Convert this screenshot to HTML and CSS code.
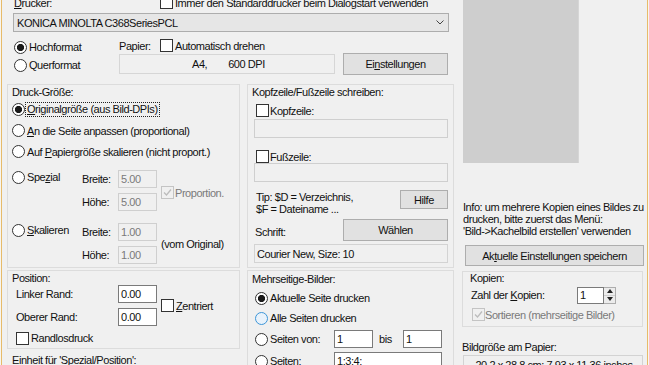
FILE: index.html
```html
<!DOCTYPE html>
<html lang="de">
<head>
<meta charset="utf-8">
<title>Drucken</title>
<link rel="stylesheet" href="styles.css">
</head>
<body>
<div class="window">
  <div class="dialog">
    <div class="left">
      <div class="printer-row">
        <span class="lbl-drucker"><u>D</u>rucker:</span>
        <span class="chk"><span class="box"></span><span>Immer den Standarddrucker beim Dialogstart verwenden</span></span>
      </div>
      <div class="combo">
        <span>KONICA MINOLTA C368SeriesPCL</span>
        <svg class="chev" width="8" height="5" viewBox="0 0 8 5"><polyline points="0.5,0.5 4,4 7.5,0.5" fill="none" stroke="#444" stroke-width="1"/></svg>
      </div>
      <div class="orient-row">
        <div class="orient">
          <div class="orow"><span class="radio on"></span><span>Hochformat</span></div>
          <div class="orow"><span class="radio"></span><span>Querformat</span></div>
        </div>
        <div class="paper">
          <div class="paper-head"><span class="paper-lbl">Papier:</span><span class="box"></span><span>Automatisch drehen</span></div>
          <div class="paper-line">
            <div class="paper-info"><span>A4,</span><span class="dpi">600 DPI</span></div>
            <div class="btn btn-wide"><span>Ei<u>n</u>stellungen</span></div>
          </div>
        </div>
      </div>
      <div class="groups">
        <div class="col-a">
          <div class="group g-size">
            <div class="glabel">Druck-Größe:</div>
            <div class="rrow"><span class="radio on"></span><span class="focus"><u>O</u>riginalgröße (aus Bild-DPIs)</span></div>
            <div class="rrow"><span class="radio"></span><span><u>A</u>n die Seite anpassen (proportional)</span></div>
            <div class="rrow"><span class="radio"></span><span>Auf <u>P</u>apiergröße skalieren (nicht proport.)</span></div>
            <div class="sz-grid sz-first">
              <div class="sz-radio"><span class="radio"></span><span>Spe<u>z</u>ial</span></div>
              <div class="sz-lbl r1">Breite:</div>
              <div class="field dis r1">5.00</div>
              <div class="sz-lbl r2">Höhe:</div>
              <div class="field dis r2">5.00</div>
              <div class="sz-extra prop"><span class="box dbox"><svg width="11" height="11" viewBox="0 0 11 11"><polyline points="2,5.5 4.5,8 9,2.5" fill="none" stroke="#bcbcbc" stroke-width="1.3"/></svg></span><span class="grey">Proportion.</span></div>
            </div>
            <div class="sz-grid sz-second">
              <div class="sz-radio"><span class="radio"></span><span><u>S</u>kalieren</span></div>
              <div class="sz-lbl r1">Breite:</div>
              <div class="field dis r1">1.00</div>
              <div class="sz-lbl r2">Höhe:</div>
              <div class="field dis r2">1.00</div>
              <div class="sz-extra">(vom Original)</div>
            </div>
          </div>
          <div class="group g-pos">
            <div class="glabel">Position:</div>
            <div class="pos-grid">
              <div class="pos-lbl r1">Linker Rand:</div>
              <div class="field r1">0.00</div>
              <div class="pos-lbl r2">Oberer Rand:</div>
              <div class="field r2">0.00</div>
              <div class="pos-extra"><span class="box"></span><span><u>Z</u>entriert</span></div>
            </div>
            <div class="randlos"><span class="box"></span><span>Randlosdruck</span></div>
          </div>
          <div class="einheit">Einheit für 'Spezial/Position':</div>
        </div>
        <div class="col-b">
          <div class="group g-kopf">
            <div class="glabel">Kopfzeile/Fußzeile schreiben:</div>
            <div class="kchk k1"><span class="box"></span><span>Kopfzeile:</span></div>
            <div class="field dis wide k-field1"></div>
            <div class="kchk k2"><span class="box"></span><span>Fußzeile:</span></div>
            <div class="field dis wide"></div>
            <div class="tip">
              <div class="tip-text">Tip: $D = Verzeichnis,<br>$F = Dateiname ...</div>
              <div class="btn btn-hilfe">Hilfe</div>
            </div>
            <div class="schrift">
              <div class="schrift-lbl">Schrift:</div>
              <div class="btn btn-wide">Wählen</div>
            </div>
            <div class="field ro wide font-field">Courier New, Size: 10</div>
          </div>
          <div class="group g-multi">
            <div class="glabel">Mehrseitige-Bilder:</div>
            <div class="mrow mfirst"><span class="radio on"></span><span>Aktuelle Seite drucken</span></div>
            <div class="mrow"><span class="radio hover"></span><span>Alle Seiten drucken</span></div>
            <div class="pages-row">
              <div class="mlabel"><span class="radio"></span><span>Seiten von:</span></div>
              <div class="field">1</div>
              <div class="bis">bis</div>
              <div class="field">1</div>
            </div>
            <div class="pages-row pages-list">
              <div class="mlabel"><span class="radio"></span><span>Seiten:</span></div>
              <div class="field list-field">1;3;4;</div>
            </div>
          </div>
        </div>
      </div>
    </div>
    <div class="right">
      <div class="preview"></div>
      <div class="info">Info: um mehrere Kopien eines Bildes zu<br>drucken, bitte zuerst das Menü:<br>'Bild-&gt;Kachelbild erstellen' verwenden</div>
      <div class="btn btn-save"><span>Ak<u>t</u>uelle Einstellungen speichern</span></div>
      <div class="group g-copies">
        <div class="glabel small">Kopien:</div>
        <div class="copies-row">
          <span class="copies-lbl">Zahl der <u>K</u>opien:</span>
          <div class="field copies-field">1</div>
          <div class="spin">
            <div class="spin-btn"><span class="tri up"></span></div>
            <div class="spin-btn"><span class="tri down"></span></div>
          </div>
        </div>
        <div class="sort-row"><span class="box dbox"><svg width="11" height="11" viewBox="0 0 11 11"><polyline points="2,5.5 4.5,8 9,2.5" fill="none" stroke="#bcbcbc" stroke-width="1.3"/></svg></span><span class="grey">Sortieren (mehrseitige Bilder)</span></div>
      </div>
      <div class="size-lbl">Bildgröße am Papier:</div>
      <div class="field ro size-field">20.2 x 28.8 cm; 7.93 x 11.36 inches</div>
    </div>
  </div>
</div>
</body>
</html>
```
FILE: styles.css
```css
* { box-sizing: border-box; }
html, body { margin: 0; padding: 0; }
body {
  width: 649px;
  height: 365px;
  overflow: hidden;
  background: #f8f5ee;
  font: 11px/14px "Liberation Sans", Arial, sans-serif;
  letter-spacing: -0.45px;
  color: #111;
}
u { text-decoration: underline; text-underline-offset: 1px; }
.window {
  margin-left: 1px;
  width: 647px;
  height: 365px;
  overflow: hidden;
  background: #f0f0f0;
  border-left: 1px solid #e7bb6a;
  border-right: 1px solid #e7bb6a;
}
.dialog { display: flex; margin-top: -6px; padding-left: 5px; }
.left { width: 447px; flex: none; }
.right { width: 188px; flex: none; margin-left: 2px; }

/* generic controls */
.box {
  width: 13px; height: 13px; flex: none;
  border: 1px solid #333; background: #fff;
  margin-right: 2px;
  display: flex; align-items: center; justify-content: center;
}
.box.dbox { border-color: #c4c4c4; background: #f0f0f0; }
.grey { color: #7a7a7a; }
.radio {
  width: 13px; height: 13px; flex: none;
  border-radius: 50%;
  border: 1px solid #333;
  background: #fff;
  margin-right: 2px;
}
.radio.on { background: radial-gradient(circle, #1a1a1a 0, #1a1a1a 3.3px, #fff 3.9px); }
.radio.hover { border-color: #3d96d8; background: #e8f2fb; }
.field {
  height: 18px;
  border: 1px solid #7a7a7a;
  background: #fff;
  padding-left: 2px;
  display: flex; align-items: center;
  white-space: nowrap;
}
.field.dis { border-color: #cfcfcf; background: #f0f0f0; color: #7a7a7a; }
.field.ro { border-color: #d3d3d3; background: #f0f0f0; }
.btn {
  background: #e1e1e1;
  border: 1px solid #adadad;
  display: flex; align-items: center; justify-content: center;
  white-space: nowrap;
}
.btn-wide { width: 105px; height: 22px; flex: none; }

/* top area */
.printer-row { display: flex; align-items: center; height: 17px; padding-left: 7px; }
.lbl-drucker { width: 146px; flex: none; }
.chk { display: flex; align-items: center; white-space: nowrap; }
.combo {
  margin: 2px 0 0 6px;
  width: 436px; height: 19px;
  border: 1px solid #adadad;
  background: #e6e6e6;
  display: flex; align-items: center; justify-content: space-between;
  padding: 0 4px 0 3px;
}
.chev { display: block; }
.orient-row { display: flex; margin-top: 6px; }
.orient { width: 112px; flex: none; padding-left: 7px; }
.orow { display: flex; align-items: center; height: 18px; }
.paper { flex: 1; }
.paper-head { display: flex; align-items: center; height: 15px; }
.paper-lbl { width: 41px; flex: none; }
.paper-line { display: flex; gap: 8px; }
.paper-info {
  width: 216px; height: 20px; margin-top: 1px;
  border: 1px solid #d6d6d6;
  display: flex; align-items: center;
  padding-left: 72px;
}
.dpi { margin-left: 21px; }

/* group boxes */
.groups { display: flex; gap: 7px; margin-top: 9px; }
.col-a { width: 233px; flex: none; }
.col-b { width: 207px; flex: none; }
.group { border: 1px solid #dcdcdc; padding-left: 4px; }
.glabel { height: 14px; line-height: 14px; white-space: nowrap; }

.g-size { height: 184px; }
.rrow { display: flex; align-items: center; height: 21px; white-space: nowrap; }
.focus { outline: 1px dotted #222; padding: 0 1px; margin-left: -1px; line-height: 13px; }
.sz-grid {
  display: grid;
  grid-template-columns: 70px 36px 39px auto;
  grid-template-rows: 18px 18px;
  row-gap: 5px;
}
.sz-first { margin-top: 8px; }
.sz-second { margin-top: 12px; }
.sz-radio { grid-column: 1; grid-row: 1; display: flex; align-items: center; height: 14px; }
.sz-lbl { grid-column: 2; display: flex; align-items: center; }
.sz-grid .field { grid-column: 3; }
.r1 { grid-row: 1; }
.r2 { grid-row: 2; }
.sz-extra {
  grid-column: 4; grid-row: 1 / 3;
  align-self: center;
  margin-left: 4px;
  display: flex; align-items: center; white-space: nowrap;
}
.sz-extra.prop { margin-top: 4px; }
.sz-extra .box { margin-right: 1px; }

.g-pos { height: 79px; margin-top: 2px; }
.pos-grid {
  display: grid;
  grid-template-columns: 106px 39px auto;
  grid-template-rows: 18px 18px;
  row-gap: 5px;
}
.pos-lbl { grid-column: 1; padding-left: 4px; display: flex; align-items: center; }
.pos-grid .field { grid-column: 2; }
.pos-extra {
  grid-column: 3; grid-row: 1 / 3;
  align-self: center; margin-left: 4px;
  display: flex; align-items: center;
}
.randlos { display: flex; align-items: center; height: 14px; margin-top: 5px; padding-left: 4px; }
.einheit { margin-top: 4px; padding-left: 5px; white-space: nowrap; }

.g-kopf { height: 184px; padding-right: 5px; }
.kchk { display: flex; align-items: center; height: 13px; padding-left: 4px; }
.kchk .box { margin-right: 1px; }
.k1 { margin-top: 5px; }
.k2 { margin-top: 12px; }
.field.wide { margin-left: 2px; height: 19px; }
.k-field1 { margin-top: 2px; }
.tip { display: flex; margin-top: 9px; }
.tip-text { padding-left: 4px; line-height: 12px; white-space: nowrap; }
.btn-hilfe { margin-left: auto; margin-top: -1px; width: 48px; height: 19px; }
.schrift { display: flex; justify-content: space-between; margin-top: 4px; }
.schrift-lbl { padding-left: 3px; padding-top: 6px; }
.font-field { margin-top: 3px; }

.g-multi { height: 110px; margin-top: 2px; }
.g-multi .glabel { margin-top: 1px; }
.mrow { display: flex; align-items: center; height: 20px; margin-left: 3px; }
.mfirst { margin-top: 2px; }
.pages-row {
  display: grid;
  grid-template-columns: 79px 39px 30px 39px;
  height: 18px;
  margin-top: 2px;
  margin-left: 3px;
}
.pages-list { margin-top: 4px; grid-template-columns: 79px 108px; }
.mlabel { display: flex; align-items: center; }
.bis { padding-left: 6px; display: flex; align-items: center; }

/* right column */
.preview { margin-left: 7px; width: 116px; height: 169px; background: #cecece; border-right: 1px solid #d6d6d6; }
.info { margin: 38px 0 0 7px; line-height: 12px; white-space: nowrap; }
.btn-save { margin: 8px 0 0 9px; width: 179px; height: 21px; }
.g-copies { margin: 5px 0 0 6px; width: 181px; height: 56px; padding-left: 7px; }
.glabel.small { line-height: 12px; height: 12px; }
.copies-row { display: flex; align-items: center; height: 18px; margin-top: 2px; padding-left: 1px; }
.copies-lbl { width: 106px; flex: none; }
.copies-field { width: 27px; height: 17px; }
.spin { width: 12px; height: 17px; display: flex; flex-direction: column; border: 1px solid #adadad; border-left: none; background: #ececec; }
.spin-btn { flex: 1; display: flex; align-items: center; justify-content: center; }
.spin-btn + .spin-btn { border-top: 1px solid #cfcfcf; }
.tri { width: 0; height: 0; border-left: 3px solid transparent; border-right: 3px solid transparent; }
.tri.up { border-bottom: 4px solid #222; }
.tri.down { border-top: 4px solid #222; }
.sort-row { display: flex; align-items: center; height: 13px; margin-top: 4px; padding-left: 2px; white-space: nowrap; }
.sort-row .box { margin-right: 0; }
.size-lbl { margin: 14px 0 0 6px; line-height: 12px; white-space: nowrap; }
.size-field { margin: 2px 0 0 7px; width: 180px; height: 19px; justify-content: center; }
```
